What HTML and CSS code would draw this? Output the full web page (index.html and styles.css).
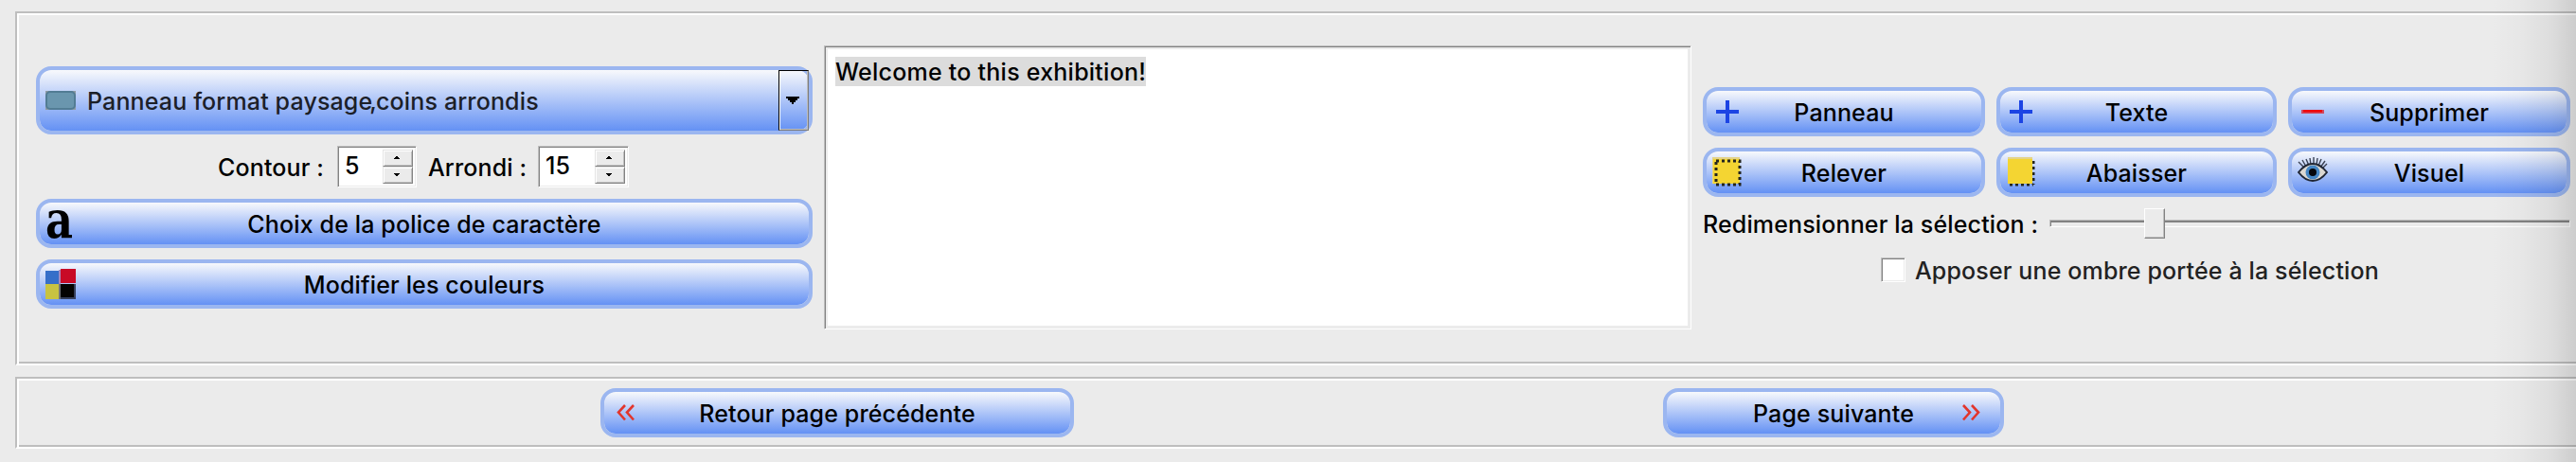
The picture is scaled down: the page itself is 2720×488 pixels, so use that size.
FILE: index.html
```html
<!DOCTYPE html>
<html lang="fr">

<head>
    <meta charset="UTF-8">
    <title>Exposition - Panneaux</title>
    <link rel="stylesheet" href="styles.css">
</head>

<body>
    <div class="panel panel-main">
        <div class="col-format">
            <div class="combo">
                <svg class="icon" viewBox="0 0 32 32">
                    <rect x="0" y="6" width="32" height="20" fill="#8f9aa3" />
                    <rect x="0" y="6" width="32" height="20" rx="5" fill="#527c94" />
                    <rect x="2" y="8" width="28" height="16" rx="3" fill="#6a96ae" />
                </svg>
                <span class="combo-text">Panneau format paysage<span class="comma">,</span>coins arrondis</span>
                <div class="combo-arrow">
                    <svg width="14" height="8" viewBox="0 0 14 8" shape-rendering="crispEdges">
                        <path d="M0 0h14v2h-2v2h-2v2H8v2H6V6H4V4H2V2H0z" />
                    </svg>
                </div>
            </div>

            <div class="spin-row">
                <label class="t-contour">Contour :</label>
                <div class="spin spin-5">
                    <span class="spin-value">5</span>
                    <div class="spin-buttons">
                        <div class="spin-btn"><svg viewBox="0 0 6 3"><path d="M2 0h2v1h1v1h1v1H0V2h1V1h1z" /></svg></div>
                        <div class="spin-btn"><svg viewBox="0 0 6 3"><path d="M0 0h6v1H5v1H4v1H2V2H1V1H0z" /></svg></div>
                    </div>
                </div>
                <label class="t-arrondi">Arrondi :</label>
                <div class="spin spin-15">
                    <span class="spin-value">15</span>
                    <div class="spin-buttons">
                        <div class="spin-btn"><svg viewBox="0 0 6 3"><path d="M2 0h2v1h1v1h1v1H0V2h1V1h1z" /></svg></div>
                        <div class="spin-btn"><svg viewBox="0 0 6 3"><path d="M0 0h6v1H5v1H4v1H2V2H1V1H0z" /></svg></div>
                    </div>
                </div>
            </div>

            <button class="btn">
                <svg class="icon icon-a" viewBox="0 0 32 32">
                    <text class="glyph-a" x="0" y="31" textLength="29" lengthAdjust="spacingAndGlyphs">a</text>
                </svg>
                <span class="btn-label">Choix de la police de caractère</span>
            </button>
            <button class="btn">
                <svg class="icon" viewBox="0 0 32 32">
                    <rect x="0" y="2" width="15" height="14" fill="#366fc9" />
                    <rect x="16" y="0" width="16" height="15" fill="#c80a26" />
                    <rect x="14" y="1" width="2" height="15" fill="#a487bd" />
                    <rect x="0" y="16" width="14" height="16" fill="#c8c341" />
                    <rect x="14" y="16" width="2" height="16" fill="#6d7178" />
                    <rect x="16" y="16" width="16" height="16" fill="#36405c" />
                    <rect x="16" y="16" width="14" height="14" fill="#040302" />
                </svg>
                <span class="btn-label">Modifier les couleurs</span>
            </button>
        </div>

        <div class="editor"><span class="selected">Welcome to this exhibition!</span></div>

        <div class="col-actions">
            <div class="btn-grid">
                <button class="btn">
                    <svg class="icon" viewBox="0 0 32 32">
                        <path d="M4 16h24M16 4v24" stroke="#1c44e4" stroke-width="4" />
                    </svg>
                    <span class="btn-label">Panneau</span>
                </button>
                <button class="btn">
                    <svg class="icon" viewBox="0 0 32 32">
                        <path d="M4 16h24M16 4v24" stroke="#1c44e4" stroke-width="4" />
                    </svg>
                    <span class="btn-label">Texte</span>
                </button>
                <button class="btn">
                    <svg class="icon" viewBox="0 0 32 32">
                        <rect x="4" y="14" width="24" height="4" fill="#cf4a60" />
                        <rect x="6" y="14" width="20" height="2.5" fill="#f00507" />
                    </svg>
                    <span class="btn-label">Supprimer</span>
                </button>
                <button class="btn">
                    <svg class="icon" viewBox="0 0 32 32">
                        <rect x="0" y="0" width="29" height="28" fill="#e4d388" />
                        <rect x="1" y="2" width="28" height="26" fill="#f4d532" />
                        <rect x="4" y="4" width="25" height="25" fill="none" stroke="#23251f" stroke-width="3" stroke-dasharray="3 3" />
                    </svg>
                    <span class="btn-label">Relever</span>
                </button>
                <button class="btn">
                    <svg class="icon" viewBox="0 0 32 32">
                        <path d="M4 29h25M29 4v25" fill="none" stroke="#23251f" stroke-width="3" stroke-dasharray="3 3" />
                        <rect x="2" y="0" width="26" height="28" fill="#e4d388" />
                        <rect x="2" y="2" width="26" height="26" fill="#f4d532" />
                    </svg>
                    <span class="btn-label">Abaisser</span>
                </button>
                <button class="btn">
                    <svg class="icon" viewBox="0 0 32 32">
                        <path d="M1 5l6 6M5 3l4 7M9 2l3 7M13 1l1 7M17 0v8M21 1l-1 7M25 2l-3 7M29 4l-5 7M31 7l-5 5" fill="none" stroke="#3b4254" stroke-width="1.4" />
                        <path d="M1 16Q8 7 16 7t15 9Q24 25 16 25T1 16z" fill="#dcd8d2" stroke="#202634" stroke-width="2" />
                        <circle cx="16" cy="16" r="7.5" fill="#4586c4" />
                        <circle cx="16" cy="16" r="4" fill="#05070c" />
                    </svg>
                    <span class="btn-label">Visuel</span>
                </button>
            </div>

            <div class="slider-row">
                <label class="t-resize">Redimensionner la sélection :</label>
                <div class="slider">
                    <div class="groove"></div>
                    <div class="handle"></div>
                </div>
            </div>

            <div class="check-row">
                <div class="checkbox"></div>
                <label class="t-shadow">Apposer une ombre portée à la sélection</label>
            </div>
        </div>
    </div>

    <div class="panel panel-nav">
        <button class="btn btn-prev">
            <svg class="icon" viewBox="0 0 32 32">
                <path d="M16 8l-7 7.500 7 8M25 8l-7 7.500 7 8" fill="none" stroke="#e2362c" stroke-width="2.600" />
            </svg>
            <span class="btn-label">Retour page précédente</span>
        </button>
        <button class="btn btn-next">
            <span class="btn-label">Page suivante</span>
            <svg class="icon" viewBox="0 0 32 32">
                <path d="M7 8l7 7.500-7 8M16 8l7 7.500-7 8" fill="none" stroke="#e2362c" stroke-width="2.600" />
            </svg>
        </button>
    </div>

    <div class="edge-shadow"></div>
</body>

</html>
```

FILE: styles.css
```css
* {
    margin: 0;
    padding: 0;
    box-sizing: border-box;
}

body {
    width: 2720px;
    height: 488px;
    overflow: hidden;
    position: relative;
    background: #ebebeb;
    color: #000;
    font-family: Inter, "Liberation Sans", sans-serif;
    font-size: 25px;
    font-weight: 450;
    letter-spacing: 0.14px;
    line-height: 31px;
    white-space: nowrap;
    padding-top: 12px;
}

/* Sunken frames, running past the right edge */
.panel {
    width: 2740px;
    margin-left: 16px;
    border: 2px solid #bebebe;
    border-bottom-color: #fff;
    box-shadow: inset 2px 2px 0 #fff, inset 0 -2px 0 #bebebe;
    display: flex;
    align-items: flex-start;
}

.panel-main {
    height: 374px;
    padding: 34px 0 0 20px;
    gap: 12px;
}

.panel-nav {
    height: 76px;
    margin-top: 12px;
    padding: 10px 0 0 616px;
    gap: 622px;
}

/* Buttons */
.btn,
.combo {
    display: flex;
    align-items: center;
    border: 4px solid #9bb6f0;
    border-radius: 16px;
    background: linear-gradient(#f8f9fc, #6491f4) padding-box;
    font: inherit;
    letter-spacing: inherit;
    color: #000;
    padding: 0 6px;
}

.btn {
    width: 100%;
    height: 52px;
}

.btn-label {
    flex: 1;
    text-align: center;
    padding-top: 2px;
    padding-right: 32px;
}

.icon {
    width: 32px;
    height: 32px;
    flex: none;
}

.icon-a {
    overflow: visible;
}

.glyph-a {
    font-family: "DejaVu Serif", serif;
    font-weight: bold;
    font-size: 55px;
    letter-spacing: 0;
}

.btn-prev {
    width: 500px;
}

.btn-next {
    width: 360px;
}

.btn-next .btn-label {
    padding: 2px 0 0 40px;
}

.btn-next .icon {
    margin-right: 8px;
}

/* Left column */
.col-format {
    width: 820px;
    flex: none;
    margin-top: 22px;
    display: flex;
    flex-direction: column;
    gap: 12px;
}

.combo {
    height: 72px;
    padding-right: 0;
    color: #1c2028;
}

.combo-text {
    flex: 1;
    padding-top: 2px;
    padding-left: 12px;
}

.comma {
    margin: 0 -1px 0 -3px;
}

.combo-arrow {
    width: 32px;
    height: 64px;
    display: flex;
    align-items: center;
    justify-content: center;
    border: 1px solid #000;
    border-right-color: #7c7c7c;
    border-bottom-color: #7c7c7c;
    box-shadow: inset 1px 0 0 #fff, inset -1px -1px 0 #bebebe;
    padding-right: 2px;
    padding-bottom: 1px;
}

.spin-row {
    height: 44px;
    display: flex;
    align-items: center;
    justify-content: center;
    gap: 12px;
    padding-right: 2px;
}

.t-contour,
.t-arrondi,
.t-resize,
.t-shadow {
    padding-top: 2px;
}

.t-contour {
    width: 114px;
}

.t-arrondi {
    width: 104px;
}

.spin {
    height: 44px;
    display: flex;
    justify-content: space-between;
    align-items: center;
    background: #fff;
    border: 1px solid #bebebe;
    border-right-color: #fff;
    border-bottom-color: #fff;
    box-shadow: inset 1px 1px 0 #828282, inset -1px -1px 0 #ebebeb;
    padding: 0 3px 0 7px;
}

.spin-5 {
    width: 84px;
}

.spin-15 {
    width: 96px;
}

.spin-value {
    margin-top: -1px;
}

.spin-buttons {
    width: 32px;
}

.spin-btn {
    height: 18px;
    display: flex;
    align-items: center;
    justify-content: center;
    background: #ebebeb;
    border: 1px solid #e4e4e4;
    border-right-color: #828282;
    border-bottom-color: #828282;
    box-shadow: inset 1px 1px 0 #fff, inset -1px -1px 0 #bebebe;
    padding: 0 3px 1px 0;
}

.spin-btn svg {
    width: 6px;
    height: 3px;
}

/* Text area */
.editor {
    width: 916px;
    height: 300px;
    flex: none;
    background: #fff;
    border: 1px solid #bebebe;
    border-right-color: #fff;
    border-bottom-color: #fff;
    box-shadow: inset 1px 1px 0 #828282, inset 3px 3px 0 #ebebeb, inset -3px -3px 0 #ebebeb;
    padding: 11px;
}

.selected {
    display: inline-block;
    height: 31px;
    line-height: 33px;
    letter-spacing: 0.24px;
    background: #dcdcdc;
}

/* Right column */
.col-actions {
    width: 916px;
    flex: none;
    margin-top: 44px;
}

.btn-grid {
    display: grid;
    grid-template-columns: 298px 296px 298px;
    gap: 12px;
}

.slider-row {
    height: 32px;
    margin-top: 12px;
    display: flex;
    align-items: center;
    gap: 12px;
}

.t-resize {
    width: 354px;
}

.slider {
    flex: 1;
    height: 32px;
    position: relative;
    padding-top: 12px;
}

.groove {
    height: 8px;
    border: 1px solid #bebebe;
    border-right-color: #fff;
    border-bottom-color: #fff;
    box-shadow: inset 1px 2px 0 #828282;
}

.handle {
    position: absolute;
    left: 100px;
    top: 0;
    width: 22px;
    height: 32px;
    background: #ebebeb;
    border: 1px solid #fff;
    border-right-color: #828282;
    border-bottom-color: #828282;
    box-shadow: inset -1px -1px 0 #bebebe;
}

.check-row {
    height: 42px;
    margin-top: 12px;
    padding-left: 188px;
    display: flex;
    align-items: center;
    gap: 10px;
    color: #222;
}

.checkbox {
    width: 26px;
    height: 26px;
    background: #fff;
    border: 1px solid #bebebe;
    border-right-color: #fff;
    border-bottom-color: #fff;
    box-shadow: inset 1px 1px 0 #828282, inset -1px -1px 0 #ebebeb;
}

/* Shade cast by the window on the right */
.edge-shadow {
    position: absolute;
    right: 0;
    top: 0;
    width: 90px;
    height: 488px;
    background: linear-gradient(to right, rgba(0, 0, 0, 0), rgba(0, 0, 0, 0.02) 35%, rgba(0, 0, 0, 0.06) 70%, rgba(0, 0, 0, 0.13));
}
```
